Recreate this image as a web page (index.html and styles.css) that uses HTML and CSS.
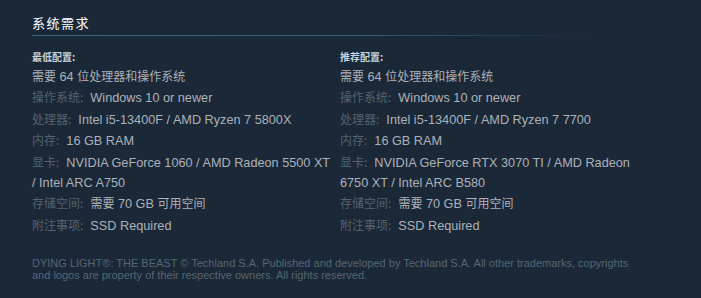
FILE: index.html
```html
<!DOCTYPE html>
<html lang="zh-CN">
<head>
<meta charset="utf-8">
<link rel="stylesheet" href="styles.css">
</head>
<body>
<div class="page">
  <h2 class="section-title">系统需求</h2>
  <div class="sysreq">
    <div class="col">
      <ul>
        <li><strong class="head">最低配置:</strong></li>
        <li><span class="cjk">需要</span> 64 <span class="cjk">位处理器和操作系统</span></li>
        <li><span class="lbl">操作系统:</span> Windows 10 or newer</li>
        <li><span class="lbl">处理器:</span> Intel i5-13400F / AMD Ryzen 7 5800X</li>
        <li><span class="lbl">内存:</span> 16 GB RAM</li>
        <li><span class="lbl">显卡:</span> NVIDIA GeForce 1060 / AMD Radeon 5500 XT / Intel ARC A750</li>
        <li><span class="lbl">存储空间:</span> <span class="cjk">需要</span> 70 GB <span class="cjk">可用空间</span></li>
        <li><span class="lbl">附注事项:</span> SSD Required</li>
      </ul>
    </div>
    <div class="col">
      <ul>
        <li><strong class="head">推荐配置:</strong></li>
        <li><span class="cjk">需要</span> 64 <span class="cjk">位处理器和操作系统</span></li>
        <li><span class="lbl">操作系统:</span> Windows 10 or newer</li>
        <li><span class="lbl">处理器:</span> Intel i5-13400F / AMD Ryzen 7 7700</li>
        <li><span class="lbl">内存:</span> 16 GB RAM</li>
        <li><span class="lbl">显卡:</span> NVIDIA GeForce RTX 3070 TI / AMD Radeon 6750 XT / Intel ARC B580</li>
        <li><span class="lbl">存储空间:</span> <span class="cjk">需要</span> 70 GB <span class="cjk">可用空间</span></li>
        <li><span class="lbl">附注事项:</span> SSD Required</li>
      </ul>
    </div>
  </div>
  <p class="legal">DYING LIGHT®: THE BEAST © Techland S.A. Published and developed by Techland S.A. All other trademarks, copyrights and logos are property of their respective owners. All rights reserved.</p>
</div>
</body>
</html>
```

FILE: styles.css
```css
html, body {
  margin: 0;
  padding: 0;
  background: #1b2838;
}
.page {
  width: 616px;
  padding: 14px 0 0 32px;
  font-family: "Liberation Sans", Arial, "Noto Sans CJK SC", sans-serif;
}
.section-title {
  margin: 0;
  width: 553px;
  font-family: "Noto Sans CJK SC", sans-serif;
  font-size: 13px;
  font-weight: normal;
  line-height: 18px;
  color: #ffffff;
  letter-spacing: 1.5px;
  padding-bottom: 3px;
  border-bottom: 1px solid transparent;
  border-image: linear-gradient(to right, #35698a 0%, #2f5f7f 60%, rgba(47,95,127,0) 100%) 1;
}
.sysreq {
  display: flex;
  gap: 6px;
  padding-top: 14px;
}
.col {
  width: 302px;
}
ul {
  list-style: none;
  margin: 0;
  padding: 0;
}
li {
  font-size: 12.7px;
  line-height: 20px;
  margin-bottom: 1.5px;
  color: #acb2b8;
}
.cjk {
  font-family: "Noto Sans CJK SC", sans-serif;
  font-size: 12px;
  line-height: 12px;
}
.head {
  display: block;
  font-family: "Noto Sans CJK SC", sans-serif;
  font-size: 10px;
  line-height: 14px;
  color: #c6d4df;
  font-weight: bold;
  margin-bottom: 2.5px;
}
.lbl {
  font-family: "Noto Sans CJK SC", sans-serif;
  font-size: 12px;
  line-height: 12px;
  margin-right: 3.5px;
  color: #56636f;
}
.legal {
  margin: 20px 0 0;
  width: 600px;
  font-size: 11px;
  line-height: 12px;
  color: #556772;
}
```
